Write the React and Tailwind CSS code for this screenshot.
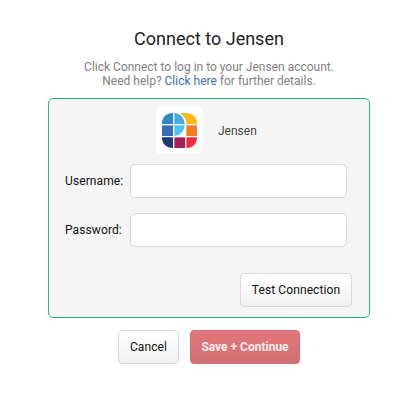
function JensenLogo() {
  return (
    <svg viewBox="0 0 105 105" className="h-[35px] w-[35px]" aria-hidden="true">
      <path d="M0 33C0 12 12 0 33 0V33Z" fill="#2d87c8" />
      <path d="M37 0C54 1 67 15 68 33H37Z" fill="#49a9de" />
      <path d="M53 0H72C93 0 105 12 105 33H74C73 19 65 7 53 0Z" fill="#fdb813" />
      <path d="M0 37H33V69H0Z" fill="#3b6db5" />
      <path d="M37 37H68C67 55 54 68 37 69Z" fill="#48c4ed" />
      <path d="M73 37H105V69H73Z" fill="#f47b20" />
      <path d="M0 73H33V105C12 105 0 93 0 73Z" fill="#1b3a70" />
      <path d="M37 73H69V105H37Z" fill="#a81e5c" />
      <path d="M73 73H105C105 93 93 105 73 105Z" fill="#ee2d37" />
    </svg>
  )
}

function Field({ label, type }) {
  return (
    <label className="flex h-[34px] items-center">
      <span className="w-[65px] shrink-0 whitespace-nowrap text-[12px] tracking-[0.1px] text-[#111]">{label}</span>
      <input
        type={type}
        className="h-[34px] w-[217px] rounded-[5px] border border-[#d8d8d8] bg-white px-3 text-[13px] outline-none"
      />
    </label>
  )
}

function Button({ children, className }) {
  return (
    <button
      type="button"
      className={`h-[34px] rounded-[4px] border border-[#d8d8d8] bg-linear-to-b from-white to-[#f1f1f1] text-[12px] tracking-[0.1px] text-[#111] ${className}`}
    >
      {children}
    </button>
  )
}

export default function App() {
  return (
    <main className="flex min-h-screen flex-col bg-white pl-[48px] pt-[27px] font-['Roboto',sans-serif]">
      <div className="w-[322px] text-center">
        <h1 className="text-[18px] leading-6 text-[#222]">Connect to Jensen</h1>
        <p className="mt-[9px] text-[12px] leading-[14px] text-[#808080]">
          Click Connect to log in to your Jensen account.
          <br />
          Need help?{' '}
          <a href="#help" className="text-[#3e70b8]">
            Click here
          </a>{' '}
          for further details.
        </p>
      </div>

      <form className="mt-[10px] flex h-[220px] w-[322px] flex-col rounded-[5px] border border-[#21bb7b] bg-[#f5f5f5] pl-4 pt-2">
        <div className="flex items-center pl-[91px]">
          <div className="flex size-[47px] items-center justify-center rounded-[5px] bg-white">
            <JensenLogo />
          </div>
          <span className="ml-[15px] text-[12px] text-[#444]">Jensen</span>
        </div>
        <div className="mt-[10px] flex flex-col gap-[15px]">
          <Field label="Username:" type="text" />
          <Field label="Password:" type="password" />
        </div>
        <Button className="ml-[175px] mt-[26px] w-[112px]">Test Connection</Button>
      </form>

      <div className="mt-3 flex gap-[11px] pl-[70px]">
        <Button className="w-[61px]">Cancel</Button>
        <button
          type="button"
          className="h-[34px] w-[110px] rounded-[4px] border border-[#d56c70] bg-linear-to-b from-[#e4767a] to-[#d07074] text-[12px] font-bold text-[#fbeeee]"
        >
          Save + Continue
        </button>
      </div>
    </main>
  )
}
